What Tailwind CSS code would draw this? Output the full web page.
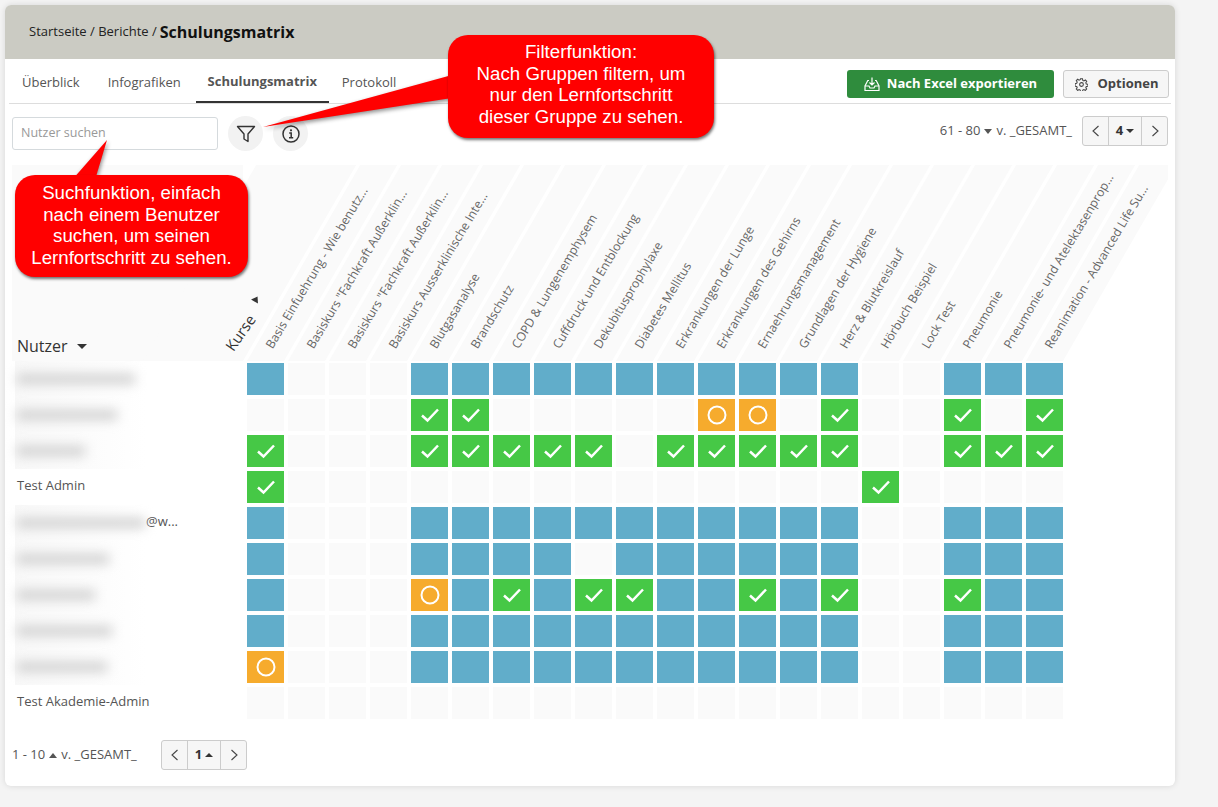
<!DOCTYPE html>
<html lang="en">
<head>
    <meta charset="UTF-8">
    <title>Schulungsmatrix</title>
    <script src="https://cdn.jsdelivr.net/npm/@tailwindcss/browser@4"></script>
</head>
<body class="bg-[#f4f4f4] font-['Open_Sans',sans-serif] text-[#444] h-[807px] overflow-hidden">
    <div class="relative ml-[5px] mt-[5px] w-[1170px] h-[781px] bg-white rounded-md shadow-[0_0_6px_rgba(0,0,0,0.12)]">
        <header class="h-[54px] bg-[#cbcbc3] rounded-t-md flex items-center pl-6 pb-[1px] text-[13px] text-[#222] gap-[3px]">
            <span>Startseite / Berichte /</span>
            <span class="text-[16px] font-bold text-[#111]">Schulungsmatrix</span>
        </header>

        <div class="mx-1 h-[45px] flex items-end justify-between border-b border-[#ddd]">
            <nav class="flex text-[13px] text-[#555] h-[45px] items-center">
                <a class="px-[13px] pt-[5px]">Überblick</a>
                <a class="px-[14px] pt-[5px] ml-[1px]">Infografiken</a>
                <a class="pt-[5px] h-[45px] flex items-center font-bold border-b-[2px] border-[#333] w-[133px] justify-center ml-[1px]">Schulungsmatrix</a>
                <a class="px-[13px] pt-[5px]">Protokoll</a>
            </nav>
            <div class="flex gap-[9px] mr-[2px] mb-[5px]">
                <button class="h-7 w-[207px] bg-[#2f8c3d] rounded-[3px] text-white text-[13px] font-bold flex items-center justify-center gap-[7px]">
                    <svg class="w-4 h-4" viewBox="0 0 16 16" fill="none" stroke="currentColor" stroke-width="1.2"><path d="M8 1.5v7M5.5 6.5 8 9l2.500-2.500M5 4.500H3.800L1 10v4.500h14V10l-2.800-5.500H11"/><path d="M1 10h4l1 2h4l1-2h4"/></svg>
                    Nach Excel exportieren
                </button>
                <button class="h-7 w-[106px] bg-[#f6f6f6] border border-[#ccc] rounded-[3px] text-[13px] font-bold text-[#444] flex items-center justify-center gap-[9px] pl-[2px]">
                    <svg class="w-[13px] h-[13px]" viewBox="0 0 16 16" fill="none" stroke="currentColor" stroke-width="1.300"><circle cx="8" cy="8" r="2.300"/><path d="M6.800 1h2.400l.4 2 1.400.6 1.700-1.100 1.700 1.700-1.100 1.700.6 1.400 2 .4v2.400l-2 .4-.6 1.400 1.100 1.700-1.700 1.700-1.700-1.100-1.400.6-.4 2H6.800l-.4-2-1.400-.6-1.700 1.100-1.700-1.700 1.100-1.700-.6-1.400-2-.4V6.800l2-.4.6-1.400-1.100-1.700 1.700-1.700 1.700 1.100 1.400-.6z"/></svg>
                    Optionen
                </button>
            </div>
        </div>

        <div class="h-[61px] flex items-start justify-between pl-[7px] pr-[7px] pt-[12px]">
            <div class="flex items-center gap-[10px]">
                <div class="w-[206px] h-[33px] border border-[#d5dadd] rounded-[3px] flex items-center px-2 pb-[1px] text-[12.500px] text-[#999]">Nutzer suchen</div>
                <span class="w-[35px] h-[35px] rounded-full bg-[#f2f2f2] flex items-center justify-center">
                    <svg class="w-5 h-5" viewBox="0 0 20 20" fill="none" stroke="#333" stroke-width="1.400" stroke-linejoin="round"><path d="M1.500 2.500h17l-6.500 7.500v7.500l-4-2.500v-5z"/></svg>
                </span>
                <span class="w-[35px] h-[35px] rounded-full bg-[#f2f2f2] flex items-center justify-center">
                    <svg class="w-[18px] h-[18px]" viewBox="0 0 18 18" fill="none" stroke="#333" stroke-width="1.500"><circle cx="9" cy="9" r="8"/><path d="M7.200 8h2v4.500M7 12.700h4.200" /><circle cx="9" cy="5.300" r="1.100" fill="#333" stroke="none"/></svg>
                </span>
            </div>
            <div class="flex items-center text-[13px] text-[#555] gap-[10px]">
                <span class="flex items-center gap-[4px]">61 - 80 <i class="w-0 h-0 border-x-[4px] border-x-transparent border-t-[5px] border-t-[#555]"></i> v. _GESAMT_</span>
                <div class="h-[30px] w-[86px] flex border border-[#ccc] rounded-[3px] bg-[#f6f6f6] text-[#333]">
                    <span class="w-[26px] flex items-center justify-center border-r border-[#ccc]"><svg class="w-3 h-3" viewBox="0 0 12 12" fill="none" stroke="#444" stroke-width="1.100"><path d="M8.500 1 3 6l5.500 5"/></svg></span>
                    <span class="flex-1 flex items-center justify-center gap-[3px] font-bold border-r border-[#ccc]">4 <i class="w-0 h-0 border-x-[4px] border-x-transparent border-t-[4px] border-t-[#333]"></i></span>
                    <span class="w-[25px] flex items-center justify-center"><svg class="w-3 h-3" viewBox="0 0 12 12" fill="none" stroke="#444" stroke-width="1.100"><path d="M3.500 1 9 6l-5.500 5"/></svg></span>
                </div>
            </div>
        </div>

        <div id="matrix" class="ml-[7px]"></div>
        <div id="foot" class="flex items-center ml-[7px] mt-[19px] text-[13px] text-[#555]">
            <span class="flex items-center gap-[4px] w-[149px]">1 - 10 <i class="w-0 h-0 border-x-[4px] border-x-transparent border-b-[5px] border-b-[#555]"></i> v. _GESAMT_</span>
            <div class="h-[30px] w-[86px] flex border border-[#ccc] rounded-[3px] bg-[#f6f6f6] text-[#333]">
                <span class="w-[26px] flex items-center justify-center border-r border-[#ccc]"><svg class="w-3 h-3" viewBox="0 0 12 12" fill="none" stroke="#444" stroke-width="1.100"><path d="M8.500 1 3 6l5.500 5"/></svg></span>
                <span class="flex-1 flex items-center justify-center gap-[3px] font-bold border-r border-[#ccc]">1 <i class="w-0 h-0 border-x-[4px] border-x-transparent border-b-[4px] border-b-[#333]"></i></span>
                <span class="w-[25px] flex items-center justify-center"><svg class="w-3 h-3" viewBox="0 0 12 12" fill="none" stroke="#444" stroke-width="1.100"><path d="M3.500 1 9 6l-5.500 5"/></svg></span>
            </div>
        </div>
    </div>

    <!-- Callouts over the page -->
    <svg class="absolute left-0 top-0 pointer-events-none" width="1218" height="300" style="filter:drop-shadow(1px 2px 2px rgba(0,0,0,.45))">
        <path d="M263 127 L452 75 L452 98 Z" fill="#f00"/>
        <path d="M107 140 L72 180 L95 180 Z" fill="#f00"/>
    </svg>
    <div class="absolute left-[448px] top-[35px] w-[266px] h-[103px] bg-[#f00] rounded-[20px] shadow-[1px_2px_3px_rgba(0,0,0,0.55)] text-white text-[18.700px] leading-[21.500px] font-['Liberation_Sans',sans-serif] text-center pt-[6px]">Filterfunktion:<br>Nach Gruppen filtern, um<br>nur den Lernfortschritt<br>dieser Gruppe zu sehen.</div>
    <div class="absolute left-[15px] top-[175px] w-[233px] h-[102px] bg-[#f00] rounded-[20px] shadow-[1px_2px_3px_rgba(0,0,0,0.55)] text-white text-[18.700px] leading-[21.500px] font-['Liberation_Sans',sans-serif] text-center pt-[7px]">Suchfunktion, einfach<br>nach einem Benutzer<br>suchen, um seinen<br>Lernfortschritt zu sehen.</div>

    <script>
        const courses = ['Basis Einfuehrung - Wie benutz...', 'Basiskurs "Fachkraft Außerklin...', 'Basiskurs "Fachkraft Außerklin...', 'Basiskurs Ausserklinische Inte...', 'Blutgasanalyse', 'Brandschutz', 'COPD & Lungenemphysem', 'Cuffdruck und Entblockung', 'Dekubitusprophylaxe', 'Diabetes Mellitus', 'Erkrankungen der Lunge', 'Erkrankungen des Gehirns', 'Ernaehrungsmanagement', 'Grundlagen der Hygiene', 'Herz & Blutkreislauf', 'Hörbuch Beispiel', 'Lock Test', 'Pneumonie', 'Pneumonie- und Atelektasenprop...', 'Reanimation - Advanced Life Su...'];
        // b = not started, g = passed, o = in progress, . = not assigned
        const data = [
            { blur: 118, cells: 'b...bbbbbbbbbbb..bbb' },
            { blur: 100, cells: '....gg.....oo.g..g.g' },
            { blur: 68, cells: 'g...ggggg.ggggg..ggg' },
            { name: 'Test Admin', cells: 'g..............g....' },
            { blur: 128, suffix: '@w...', cells: 'b...bbbbbbbbbbb..bbb' },
            { blur: 92, cells: 'b...bbbb.bbbbbb..bbb' },
            { blur: 78, cells: 'b...obgbggbbgbg..gbb' },
            { blur: 95, cells: 'b...bbbbbbbbbbb..bbb' },
            { blur: 90, cells: 'o...bbbbbbbbbbb..bbb' },
            { name: 'Test Akademie-Admin', cells: '....................' },
        ];
        const check = '<svg width="20" height="16" viewBox="0 0 20 16" fill="none" stroke="white" stroke-width="2.500"><path d="M2 8.500l5.500 5L18 2.500"/></svg>';
        const ring = '<svg width="20" height="20" viewBox="0 0 20 20" fill="none" stroke="white" stroke-width="2"><circle cx="10" cy="10" r="8.500"/></svg>';

        let html = '<div class="flex h-[196px] w-[1156px] overflow-hidden">';
        html += '<div class="w-[235px] shrink-0 relative">';
        html += '<div class="absolute left-0 top-0 bottom-0 w-[231px] bg-[#fafafa]"></div>';
        html += '<div class="absolute left-[131px] top-0 bottom-0 w-[100px] origin-bottom-left -skew-x-[30deg] bg-[#fafafa]"></div>';
        html += '<span class="absolute left-[5px] bottom-[3px] text-[16px] font-medium text-[#333] flex items-center gap-[9px]">Nutzer <i class="w-0 h-0 border-x-[5px] border-x-transparent border-t-[5px] border-t-[#333]"></i></span>';
        html += '<span class="absolute left-[226px] bottom-[6px] text-[15px] font-medium text-[#333] origin-bottom-left -rotate-[55deg] whitespace-nowrap">Kurse</span>';
        html += '<i class="absolute left-[240px] bottom-[59px] w-0 h-0 rotate-[30deg] border-x-[4px] border-x-transparent border-b-[6px] border-b-[#333]"></i>';
        html += '</div><div class="flex relative">';
        courses.forEach(c => {
            html += '<div class="w-[41px] h-[196px] shrink-0 relative">';
            html += '<div class="absolute left-0 top-0 bottom-0 w-[37px] origin-bottom-left -skew-x-[30deg] bg-[#fafafa]"></div>';
            html += '<span class="absolute left-[28px] bottom-[10px] origin-bottom-left -rotate-[59deg] whitespace-nowrap text-[12.200px] leading-[14px] text-[#666]">' + c + '</span>';
            html += '</div>';
        });
        html += '</div></div>';

        html += '<div>';
        data.forEach(r => {
            html += '<div class="flex h-[36px] items-center">';
            html += '<div class="w-[235px] shrink-0 text-[13px] text-[#555] flex items-center">';
            if (r.name) {
                html += '<span class="pl-[5px] pb-[2px]">' + r.name + '</span>';
            } else {
                html += '<span class="flex items-center w-[131px] h-[36px] ml-[3px] pl-[2px] bg-linear-to-r from-[#f8f8f8] to-white"><span class="block h-[10px] bg-[#d0d0d0] blur-[6px]" style="width:' + r.blur + 'px"></span></span>';
                if (r.suffix) html += '<span class="pb-[2px]">' + r.suffix + '</span>';
            }
            html += '</div><div class="flex gap-[4px]">';
            r.cells.split('').forEach(c => {
                if (c === 'b') html += '<div class="w-[37px] h-[32px] bg-[#61adca]"></div>';
                if (c === '.') html += '<div class="w-[37px] h-[32px] bg-[#fafafa]"></div>';
                if (c === 'g') html += '<div class="w-[37px] h-[32px] bg-[#46c846] flex items-center justify-center">' + check + '</div>';
                if (c === 'o') html += '<div class="w-[37px] h-[32px] bg-[#f6ab2d] flex items-center justify-center">' + ring + '</div>';
            });
            html += '</div></div>';
        });
        html += '</div>';
        document.getElementById('matrix').innerHTML = html;
    </script>
</body>
</html>
